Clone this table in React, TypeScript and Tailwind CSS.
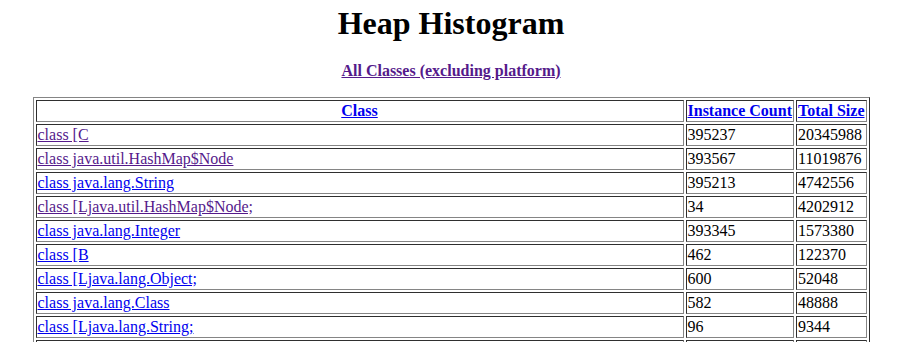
type Row = {
  name: string;
  count: number;
  size: number;
  visited?: boolean;
};

const rows: Row[] = [
  { name: "class [C", count: 395237, size: 20345988, visited: true },
  { name: "class java.util.HashMap$Node", count: 393567, size: 11019876, visited: true },
  { name: "class java.lang.String", count: 395213, size: 4742556 },
  { name: "class [Ljava.util.HashMap$Node;", count: 34, size: 4202912, visited: true },
  { name: "class java.lang.Integer", count: 393345, size: 1573380 },
  { name: "class [B", count: 462, size: 122370 },
  { name: "class [Ljava.lang.Object;", count: 600, size: 52048 },
  { name: "class java.lang.Class", count: 582, size: 48888 },
  { name: "class [Ljava.lang.String;", count: 96, size: 9344 },
  { name: "class [I", count: 41, size: 7520 },
];

// classic border="1" look: table outset, cells inset
const cell =
  "border border-solid border-t-[#2f2f2f] border-l-[#2f2f2f] border-r-[#858585] border-b-[#858585] p-px align-middle";

const link = (visited?: boolean) =>
  visited ? "underline text-[#551a8b]" : "underline text-[#0000ee]";

export default function App() {
  return (
    <div className="min-h-screen bg-white text-black font-['Liberation_Serif',serif] text-[16px] leading-[normal]">
      <h1 className="pt-[5px] text-center text-[32px] font-bold leading-[normal]">Heap Histogram</h1>

      <p className="mt-[20px] text-center font-bold leading-[normal]">
        <a href="#" className={link(true)}>
          All Classes (excluding platform)
        </a>
      </p>

      <table className="mx-auto mt-[17px] w-[837px] border-separate border-spacing-[2px] border border-solid border-t-[#858585] border-l-[#858585] border-r-[#2f2f2f] border-b-[#2f2f2f] leading-[normal]">
        <thead>
          <tr>
            <th className={`${cell} w-full text-center font-bold`}>
              <a href="#" className={link()}>
                Class
              </a>
            </th>
            <th className={`${cell} text-center font-bold whitespace-nowrap`}>
              <a href="#" className={link()}>
                Instance Count
              </a>
            </th>
            <th className={`${cell} text-center font-bold whitespace-nowrap`}>
              <a href="#" className={link()}>
                Total Size
              </a>
            </th>
          </tr>
        </thead>
        <tbody>
          {rows.map((r) => (
            <tr key={r.name}>
              <td className={`${cell} text-left`}>
                <a href="#" className={link(r.visited)}>
                  {r.name}
                </a>
              </td>
              <td className={`${cell} text-left whitespace-nowrap`}>{r.count}</td>
              <td className={`${cell} text-left whitespace-nowrap`}>{r.size}</td>
            </tr>
          ))}
        </tbody>
      </table>
    </div>
  );
}
